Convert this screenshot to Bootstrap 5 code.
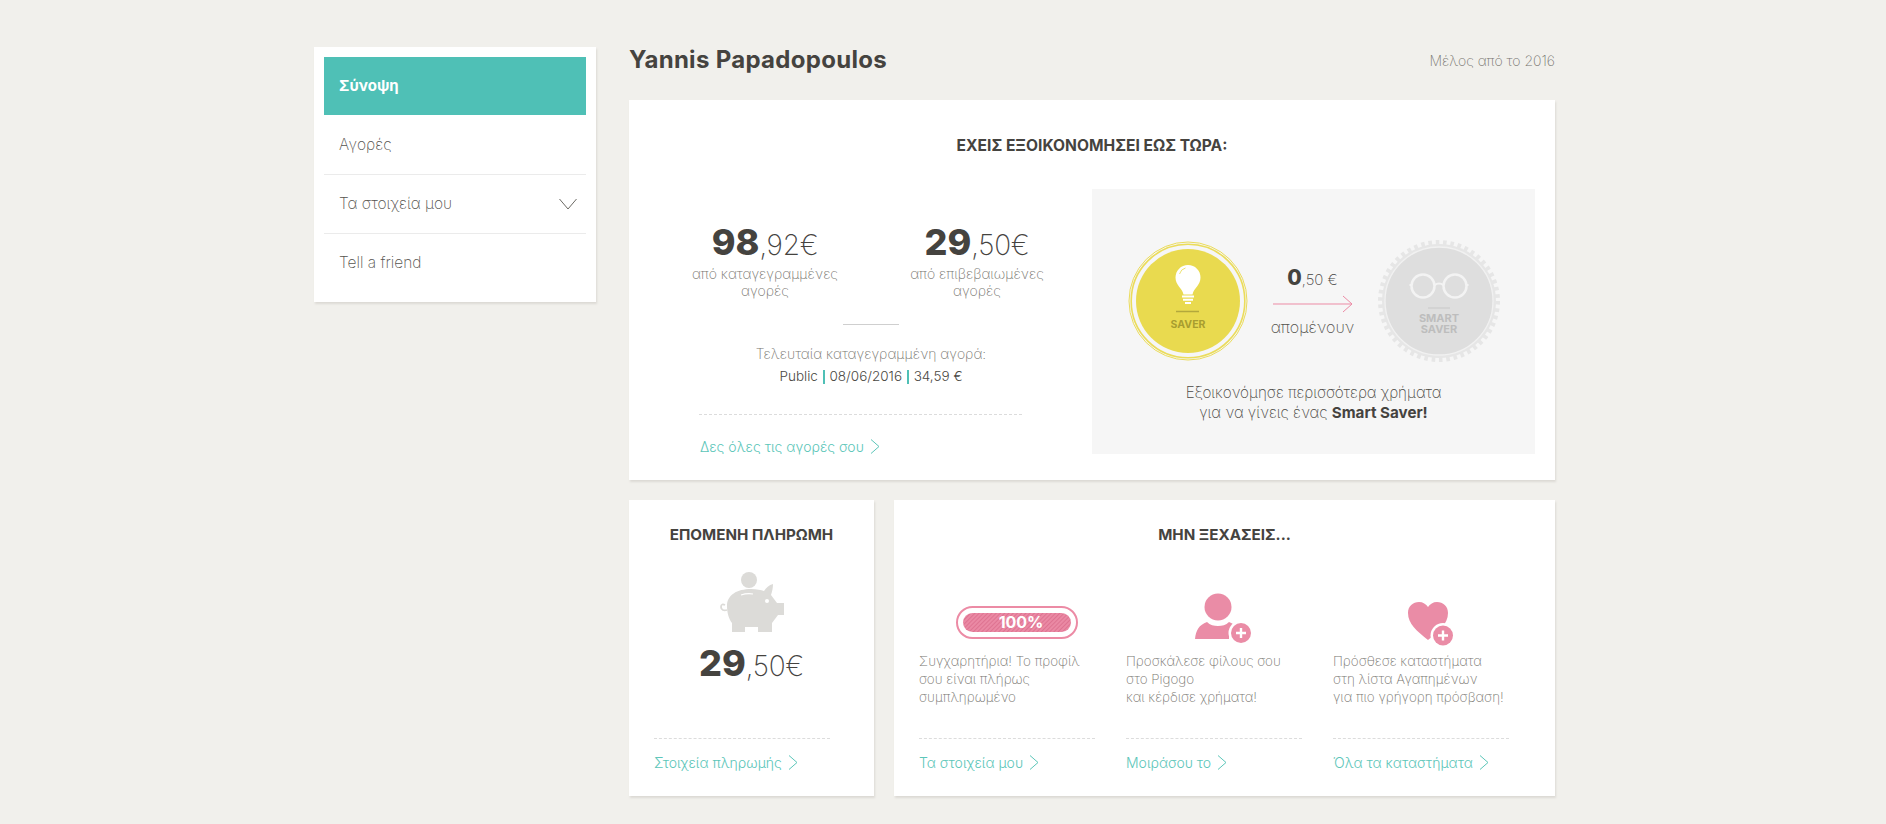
<!DOCTYPE html>
<html lang="el">
<head>
<meta charset="utf-8">
<title>Pigogo</title>
<link rel="stylesheet" href="https://cdn.jsdelivr.net/npm/bootstrap@5.3.0/dist/css/bootstrap.min.css">
<style>
body{background:#f1f0ec;font-family:Inter,"Noto Sans",sans-serif;font-weight:200;color:#4a4843;min-height:824px}
.shell{width:1241px;margin-left:314px;padding-top:47px;gap:33px}
.sheet{background:#fff;box-shadow:1px 2px 2px #dcdad5}
.side{width:282px;height:255px;padding:10px}
.side-item{display:flex;align-items:center;justify-content:space-between;height:59px;padding:0 9px 0 15px;font-size:15.500px;color:#55534e;border-bottom:1px solid #ebebeb;text-decoration:none}
.side-item:last-child{border-bottom:0;padding-bottom:2px}
.side-item.on{height:58px;background:#4fc0b6;color:#fff;font-weight:700;font-size:15px;border-bottom:0;margin-bottom:1px}
.main-col{width:926px}
.head{height:26px;margin-bottom:27px}
.who{font-size:24px;font-weight:700;margin:0;color:#45433f;letter-spacing:.3px}
.since{font-size:14px;color:#77756f}
.ttl{font-size:15.200px;font-weight:700;text-align:center;margin:0;line-height:20px;color:#45433f}
.top-card{height:380px;padding-top:36px}
.top-card .ttl{font-size:15.600px}
.top-row{margin-top:33px}
.left-col{width:463px;padding-left:30px;padding-right:9px}
.stat{width:212px;text-align:center;padding-top:33px}
.amt{font-size:28px;line-height:40px;letter-spacing:-.3px;color:#45433f}
.amt b{font-size:36px;font-weight:800;color:#45433f;letter-spacing:0}
.lbl{font-size:14px;line-height:17px;color:#77756f}
.rule{width:56px;height:1px;background:#cfcfcf;margin:25px auto 0}
.last{text-align:center;font-size:14px;line-height:23px;margin-top:17px;color:#77756f}
.last div+div{color:#4a4843;font-weight:300;font-size:13.500px}
.sep{display:inline-block;width:2px;height:14px;background:#4fc0b6;vertical-align:-3px;margin:0 1px}
.dash{border-top:1px dashed #dcdcdc}
.go{display:inline-flex;align-items:center;gap:6px;font-size:14px;font-weight:300;color:#5cc6b9;text-decoration:none}
.left-dash{width:323px;margin:26px 0 0 40px}
.left-go{margin:21px 0 0 41px}
.panel{width:443px;height:265px;background:#f6f6f6;padding-top:51px}
.mid{width:130px;text-align:center;padding-top:2px}
.mid-amt{font-size:15px;line-height:22px;color:#45433f}
.mid-amt b{font-size:21px;font-weight:800;color:#45433f}
.mid-w{font-size:16px;line-height:20px;color:#55534e}
.panel-txt{font-size:15.200px;line-height:20px;text-align:center;margin-top:21px;color:#4a4843}
.panel-txt b{font-weight:700;color:#45433f}
.bottom{gap:20px;margin-top:20px}
.low{height:296px;padding-top:25px}
.pay{width:245px}
.forget{width:661px}
.pay-ico{margin-top:27px}
.pay-amt{text-align:center;margin-top:11px}
.foot-dash{width:176px}
.foot-go{margin-top:13px}
.pay-foot{padding-left:25px;margin-top:52px}
.trio{padding-left:25px;gap:31px;margin-top:20px}
.tip{width:176px}
.tip-ico{height:81px;display:flex;align-items:flex-end;justify-content:center;padding-left:20px}
.bar-ico{margin-bottom:7px}
.man-ico{margin-bottom:1px}
.tip-txt{font-size:13.400px;line-height:18px;color:#77756f;height:86px;margin-top:6px;white-space:nowrap}
</style>
</head>
<body>
<div class="d-flex align-items-start shell">
  <nav class="sheet side">
    <a class="side-item on" href="#">Σύνοψη</a>
    <a class="side-item" href="#">Αγορές</a>
    <a class="side-item" href="#">Τα στοιχεία μου
      <svg width="18" height="12" viewBox="0 0 18 12"><path d="M.5 1 9 11l8.500-10" fill="none" stroke="#6b6964"/></svg></a>
    <a class="side-item" href="#">Tell a friend</a>
  </nav>
  <main class="main-col">
    <header class="d-flex justify-content-between align-items-center head">
      <h1 class="who">Yannis Papadopoulos</h1>
      <span class="since">Μέλος από το 2016</span>
    </header>
    <section class="sheet top-card">
      <h2 class="ttl">ΕΧΕΙΣ ΕΞΟΙΚΟΝΟΜΗΣΕΙ ΕΩΣ ΤΩΡΑ:</h2>
      <div class="d-flex top-row">
        <div class="left-col">
          <div class="d-flex">
            <div class="stat"><div class="amt"><b>98</b>,92€</div><div class="lbl">από καταγεγραμμένες<br>αγορές</div></div>
            <div class="stat"><div class="amt"><b>29</b>,50€</div><div class="lbl">από επιβεβαιωμένες<br>αγορές</div></div>
          </div>
          <div class="rule"></div>
          <div class="last"><div>Τελευταία καταγεγραμμένη αγορά:</div><div>Public <span class="sep"></span> 08/06/2016 <span class="sep"></span> 34,59 €</div></div>
          <div class="dash left-dash"></div>
          <a class="go left-go" href="#">Δες όλες τις αγορές σου
            <svg width="10" height="15" viewBox="0 0 10 15"><path d="m1 .5 8 7-8 7" fill="none" stroke="#5cc6b9"/></svg></a>
        </div>
        <div class="panel">
          <div class="d-flex justify-content-center align-items-center">
            <svg width="120" height="120" viewBox="0 0 120 120">
              <circle cx="60" cy="60" r="59" fill="none" stroke="#ebdc5a" stroke-width="1"/>
              <circle cx="60" cy="60" r="56.800" fill="none" stroke="#ebdc5a" stroke-width="1.600"/>
              <circle cx="60" cy="60" r="52" fill="#e9da4f"/>
              <path d="M60 24c-7 0-12.500 5.500-12.500 12.500 0 8 6.500 10 8 17h9c1.500-7 8-9 8-17C72.500 29.500 67 24 60 24z" fill="#fff"/>
              <path d="M51.500 33q1.500-5 6-6" fill="none" stroke="#e9da4f" stroke-width=".8"/>
              <path d="M54 55.500h12M55 58.800h10M57 62h6" stroke="#fff" stroke-width="2"/>
              <path d="M48 70.500h23" stroke="#b3a83c" stroke-width="1.500"/>
              <text x="60" y="87" text-anchor="middle" font-family="Inter,sans-serif" font-size="10.500" font-weight="700" fill="#a89d2f">SAVER</text>
            </svg>
            <div class="mid">
              <div class="mid-amt"><b>0</b>,50 €</div>
              <svg class="d-block mx-auto my-1" width="80" height="18" viewBox="0 0 80 18"><path d="M0 9h79M70 1l9 8-9 8" fill="none" stroke="#ec8ba5" stroke-width="1"/></svg>
              <div class="mid-w">απομένουν</div>
            </div>
            <svg width="122" height="122" viewBox="0 0 122 122">
              <circle cx="61" cy="61" r="58.500" fill="none" stroke="#e6e6e6" stroke-width="5" stroke-dasharray="3.600 3.750"/>
              <circle cx="61" cy="61" r="57" fill="#e6e6e6"/>
              <circle cx="61" cy="61" r="54" fill="#dedede" stroke="#f1f1f1" stroke-width="1.300"/>
              <circle cx="45" cy="46" r="11.500" fill="none" stroke="#f3f3f3" stroke-width="2.500"/>
              <circle cx="77" cy="46" r="11.500" fill="none" stroke="#f3f3f3" stroke-width="2.500"/>
              <path d="M56.500 45q4.500-3 9 0M31.500 45h2M88.500 45h2" fill="none" stroke="#f3f3f3" stroke-width="2.200"/>
              <path d="M50 68h22" stroke="#cbcbcb" stroke-width="1.200"/>
              <text x="61" y="82" text-anchor="middle" font-family="Inter,sans-serif" font-size="11" font-weight="700" fill="#bdbdbd">SMART</text>
              <text x="61" y="93" text-anchor="middle" font-family="Inter,sans-serif" font-size="11" font-weight="700" fill="#bdbdbd">SAVER</text>
            </svg>
          </div>
          <p class="panel-txt mb-0">Εξοικονόμησε περισσότερα χρήματα<br>για να γίνεις ένας <b>Smart Saver!</b></p>
        </div>
      </div>
    </section>
    <div class="d-flex bottom">
      <section class="sheet low pay">
        <h2 class="ttl">ΕΠΟΜΕΝΗ ΠΛΗΡΩΜΗ</h2>
        <svg class="d-block mx-auto pay-ico" width="66" height="60" viewBox="0 0 66 60">
          <circle cx="30" cy="8" r="8" fill="#dcdbd8"/>
          <path d="M8 34C8 23 18 17 32 17c6 0 10 1 13 2 2-3 5-6 9-7 0 4-1 8-2 11l6 8h7v12h-6c-2 3-4 5-6 8v9H39v-5H26v5H13v-9c-3-4-5-10-5-17z" fill="#dcdbd8"/>
          <path d="M8 38c-3 1-6 0-6-3s2-3 4-2" fill="none" stroke="#dcdbd8" stroke-width="1.800"/>
          <path d="M22 23q6-2 12-1" fill="none" stroke="#fff" stroke-width="1.200"/>
          <circle cx="48" cy="29" r="2" fill="#fff"/>
        </svg>
        <div class="amt pay-amt"><b>29</b>,50€</div>
        <div class="pay-foot">
          <div class="dash foot-dash"></div>
          <a class="go foot-go" href="#">Στοιχεία πληρωμής
            <svg width="10" height="15" viewBox="0 0 10 15"><path d="m1 .5 8 7-8 7" fill="none" stroke="#5cc6b9"/></svg></a>
        </div>
      </section>
      <section class="sheet low forget">
        <h2 class="ttl">ΜΗΝ ΞΕΧΑΣΕΙΣ...</h2>
        <div class="d-flex trio">
          <div class="tip">
            <div class="tip-ico">
              <svg class="bar-ico" width="122" height="33" viewBox="0 0 122 33">
                <defs><pattern id="st" width="3" height="3" patternUnits="userSpaceOnUse" patternTransform="rotate(45)"><rect width="3" height="3" fill="#ea89a4"/><rect width="1" height="3" fill="#de7391"/></pattern></defs>
                <rect x="1" y="1" width="120" height="31" rx="15.500" fill="#fff" stroke="#ec8ba5" stroke-width="2"/>
                <rect x="7" y="7" width="108" height="19" rx="9.500" fill="url(#st)"/>
                <text x="65" y="22" text-anchor="middle" font-family="Inter,sans-serif" font-size="16" font-weight="700" fill="#fff">100%</text>
              </svg>
            </div>
            <div class="tip-txt">Συγχαρητήρια! Το προφίλ<br>σου είναι πλήρως<br>συμπληρωμένο</div>
            <div class="dash"></div>
            <a class="go foot-go" href="#">Τα στοιχεία μου
              <svg width="10" height="15" viewBox="0 0 10 15"><path d="m1 .5 8 7-8 7" fill="none" stroke="#5cc6b9"/></svg></a>
          </div>
          <div class="tip">
            <div class="tip-ico">
              <svg class="man-ico" width="58" height="52" viewBox="0 0 58 52">
                <circle cx="23" cy="14" r="13.500" fill="#ea8ca6"/>
                <path d="M0 46c1-9 4-14 12-17 3 3 7 4 11 4s8-1 11-4c3 1 6 3 8 5-5 2-8 7-8 12z" fill="#ea8ca6"/>
                <circle cx="46" cy="40" r="12.500" fill="#fff"/>
                <circle cx="46" cy="40" r="10" fill="#ea8ca6"/>
                <path d="M46 35v10M41 40h10" stroke="#fff" stroke-width="2.400"/>
              </svg>
            </div>
            <div class="tip-txt">Προσκάλεσε φίλους σου<br>στο Pigogo<br>και κέρδισε χρήματα!</div>
            <div class="dash"></div>
            <a class="go foot-go" href="#">Μοιράσου το
              <svg width="10" height="15" viewBox="0 0 10 15"><path d="m1 .5 8 7-8 7" fill="none" stroke="#5cc6b9"/></svg></a>
          </div>
          <div class="tip">
            <div class="tip-ico">
              <svg width="48" height="46" viewBox="0 0 48 46">
                <path d="M21 40C10 31 1 24 1 13 1 6 6 2 12 2c4 0 7 2 9 5 2-3 5-5 9-5 6 0 11 4 11 11 0 11-9 18-20 27z" fill="#ea8ca6"/>
                <circle cx="36" cy="35.500" r="12.500" fill="#fff"/>
                <circle cx="36" cy="35.500" r="10" fill="#ea8ca6"/>
                <path d="M36 30.500v10M31 35.500h10" stroke="#fff" stroke-width="2.400"/>
              </svg>
            </div>
            <div class="tip-txt">Πρόσθεσε καταστήματα<br>στη λίστα Αγαπημένων<br>για πιο γρήγορη πρόσβαση!</div>
            <div class="dash"></div>
            <a class="go foot-go" href="#">Όλα τα καταστήματα
              <svg width="10" height="15" viewBox="0 0 10 15"><path d="m1 .5 8 7-8 7" fill="none" stroke="#5cc6b9"/></svg></a>
          </div>
        </div>
      </section>
    </div>
  </main>
</div>
<script src="https://cdn.jsdelivr.net/npm/bootstrap@5.3.0/dist/js/bootstrap.bundle.min.js"></script>
</body>
</html>
